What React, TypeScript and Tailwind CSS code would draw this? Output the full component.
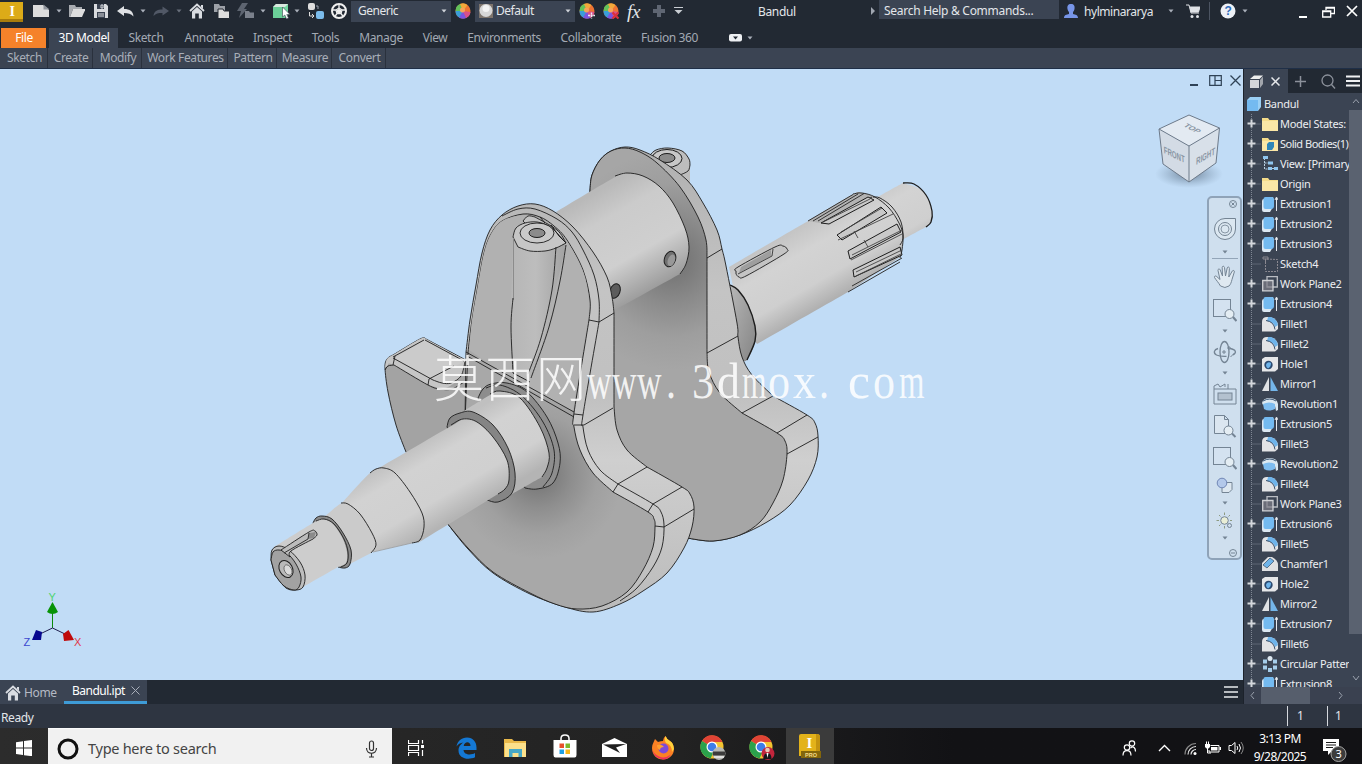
import type { ReactNode } from "react";
import clsx from "clsx";

const EDGE = "#1d1d1d";

// Catmull-Rom through the given points, a repeated point makes a corner
function spline(points: string, close = false) {
  const p = points.trim().split(/\s+/).map((s) => s.split(",").map(Number));
  let d = `M${p[0][0]} ${p[0][1]}`;
  for (let i = 0; i < p.length - 1; i++) {
    const a = p[Math.max(i - 1, 0)];
    const b = p[i];
    const c = p[i + 1];
    const e = p[Math.min(i + 2, p.length - 1)];
    if (b[0] === c[0] && b[1] === c[1]) continue;
    const x1 = b[0] + (c[0] - a[0]) / 6;
    const y1 = b[1] + (c[1] - a[1]) / 6;
    const x2 = c[0] - (e[0] - b[0]) / 6;
    const y2 = c[1] - (e[1] - b[1]) / 6;
    d += `C${x1.toFixed(1)} ${y1.toFixed(1)} ${x2.toFixed(1)} ${y2.toFixed(1)} ${c[0]} ${c[1]}`;
  }
  return close ? d + "Z" : d;
}

function Face({ pts, fill, stroke = "none" }: { pts: string; fill: string; stroke?: string }) {
  return <path d={spline(pts, true)} fill={fill} stroke={stroke} strokeWidth=".9" />;
}

function Line({ pts, w = 0.9 }: { pts: string; w?: number }) {
  return <path d={spline(pts)} fill="none" stroke={EDGE} strokeWidth={w} />;
}

function Icon({ className, w = 16, h = 16, children }: { className?: string; w?: number; h?: number; children: ReactNode }) {
  return (
    <svg className={clsx("shrink-0", className)} width={w} height={h} viewBox={`0 0 ${w} ${h}`} fill="none">
      {children}
    </svg>
  );
}

function Caret({ className, color = "#aab0ba" }: { className?: string; color?: string }) {
  return (
    <Icon w={6} h={4} className={className}>
      <path d="M.5 .5h5L3 3.5z" fill={color} />
    </Icon>
  );
}

/* ---------- 3D MODEL ---------- */

const WATERMARK: [string, number, number][] = [
  ["w", 587, 24.5], ["w", 612, 24.5], ["w", 637, 24.5], [".", 666, 10],
  ["3", 692, 22], ["d", 717, 23], ["m", 742, 24.5], ["o", 768, 22], ["x", 793, 23], [".", 819, 10],
  ["c", 848, 22], ["o", 873, 22], ["m", 899, 25.5],
];

function Crankshaft() {
  return (
    <svg className="block" width="1243" height="611" viewBox="0 69 1243 611">
      <defs>
        <linearGradient id="front" gradientUnits="userSpaceOnUse" x1="454" y1="422" x2="496" y2="494">
          <stop offset="0" stopColor="#c0c0c0" />
          <stop offset=".25" stopColor="#d2d2d2" />
          <stop offset=".7" stopColor="#d0d0d0" />
          <stop offset="1" stopColor="#b4b4b4" />
        </linearGradient>
        <linearGradient id="pin" gradientUnits="userSpaceOnUse" x1="628" y1="174" x2="684" y2="272">
          <stop offset="0" stopColor="#b9b9b9" />
          <stop offset=".25" stopColor="#cbcbcb" />
          <stop offset=".65" stopColor="#cfcfcf" />
          <stop offset="1" stopColor="#9c9c9c" />
        </linearGradient>
        <linearGradient id="rear" gradientUnits="userSpaceOnUse" x1="808" y1="221" x2="849" y2="292">
          <stop offset="0" stopColor="#c4c4c4" />
          <stop offset=".3" stopColor="#d3d3d3" />
          <stop offset=".7" stopColor="#cfcfcf" />
          <stop offset="1" stopColor="#aeaeae" />
        </linearGradient>
        <linearGradient id="rim" gradientUnits="userSpaceOnUse" x1="0" y1="150" x2="0" y2="620">
          <stop offset="0" stopColor="#b0b0b0" />
          <stop offset=".3" stopColor="#c4c4c4" />
          <stop offset=".52" stopColor="#c0c0c0" />
          <stop offset=".66" stopColor="#cfcfcf" />
          <stop offset="1" stopColor="#bababa" />
        </linearGradient>
        <linearGradient id="boss" x1="0" y1="0" x2="1" y2="0">
          <stop offset="0" stopColor="#b6b6b6" />
          <stop offset=".45" stopColor="#bdbdbd" />
          <stop offset="1" stopColor="#a2a2a2" />
        </linearGradient>
        <linearGradient id="flange" x1="0" y1="0" x2="1" y2="1">
          <stop offset="0" stopColor="#b8b8b8" />
          <stop offset="1" stopColor="#848484" />
        </linearGradient>
        <radialGradient id="pinShade" gradientUnits="userSpaceOnUse" cx="672" cy="260" r="110">
          <stop offset="0" stopColor="#6e6e6e" />
          <stop offset=".4" stopColor="#8b8b8b" />
          <stop offset=".7" stopColor="#9e9e9e" />
          <stop offset="1" stopColor="#a6a6a6" />
        </radialGradient>
        <radialGradient id="webShade" gradientUnits="userSpaceOnUse" cx="538" cy="474" r="85">
          <stop offset="0" stopColor="#707070" />
          <stop offset=".4" stopColor="#8e8e8e" />
          <stop offset=".7" stopColor="#a0a0a0" />
          <stop offset="1" stopColor="#a8a8a8" />
        </radialGradient>
        <radialGradient id="cubeShade">
          <stop offset="0" stopColor="#5f7287" stopOpacity=".85" />
          <stop offset="1" stopColor="#7f98b0" stopOpacity="0" />
        </radialGradient>
      </defs>

      {/* output end of the shaft */}
      <Face pts="872,200 903,183 903,183 923,191 932,211 930,223 926,227 926,227 900,241 900,241" fill="url(#rear)" />
      <Line pts="903,183 914,184 926,195 932,211 931,222 926,227" w={1.3} />
      <Face pts="729,267 729,267 808,221 808,221 852,195 862,193 875,197 889,208 899,223 903,238 900,257 900,257 848,292 848,292 757,344 757,344 740,320 740,320" fill="url(#rear)" />
      <Face pts="808,221 808,221 852,195 862,193 875,197 875,197 826,224 826,224" fill="#b3b3b3" />
      <path d="M808 221L853 194.500M813 221L858 194M818 221L864 193.500M823 222L872 197M848 292L900 262M852 286L902 258" stroke="#333" />
      <Line pts="853,194 862,193 875,197 889,208 899,223 903,235 902,250 900,258" />
      <Line pts="873,197 880,198 892,207 901,222 903,238 900,245" />
      <path d="M821 223L868 197L874 200L829 224ZM837 235L881 207L887 213L842 240ZM848 251L897 224L901 232L850 259ZM853 270L900 247L902 255L854 277Z" fill="#c9c9c9" stroke={EDGE} />
      <path d="M823 222L870 199M841 232L882 208M852 255L902 230M856 272L902 250M856 276L901 254M854 231L858 238M864 240L868 247M838 240L893 214M851 260L902 234" stroke="#444" strokeWidth=".9" />
      <Face pts="736,271 738,267 775,247 783,246 787,249 784,254 746,276 739,277 736,274" fill="#c4c4c4" stroke={EDGE} />
      <path d="M739 273L771 256L771 250L741 267Z" fill="#9e9e9e" />
      <path d="M738 274L772 256L773 249" stroke="#444" fill="none" />
      <Face pts="729,285 738,289 748,304 755,326 755,341 747,360 740,355 730,320" fill="url(#flange)" />
      <Line pts="730,285 738,290 748,305 755,326 755,341 747,360" w={1.4} />

      {/* rear web */}
      <Face
        pts="651,156 655,151 668,148 683,151 690,160 690,160 690,184 690,184 672,176"
        fill="#bdbdbd"
      />
      <Line pts="650,155 656,150 668,148 682,151 689,159 690,165" />
      <Line pts="690,165 688,171 680,175" />
      <ellipse cx="667" cy="158.500" rx="15" ry="9" fill="#c8c8c8" stroke={EDGE} />
      <ellipse cx="667" cy="158" rx="8" ry="4.500" fill="#8b8b8b" stroke={EDGE} />
      <Face
        pts="590,190 592,175 600,160 611,151 625,147 640,150 660,160 687,180 703,203 717,230 722,249 726,266 737,323 738,337 742,357 752,375 773,396 773,396 807,415 815,423 818,436 817,457 808,480 790,505 767,522 740,535 713,541 687,538 687,538 600,520 600,520 590,400 590,400"
        fill="url(#rim)"
        stroke={EDGE}
      />
      <Face
        pts="590,190 592,175 600,160 611,151 625,148 640,152 657,163 680,187 698,217 706,240 707,258 707,258 707,353 707,353 709,372 720,393 742,413 742,413 777,433 785,441 787,454 783,480 773,503 760,522 740,535 713,541 687,538 687,538 600,520 600,520 590,400 590,400"
        fill="url(#pinShade)"
        stroke={EDGE}
      />
      <path d="M707 258L722 249M707 353L738 336M742 413L773 396M777 433L807 415M787 454L818 437" stroke={EDGE} strokeWidth=".9" />

      {/* crank pin */}
      <Face pts="556,212 556,212 615,177 627,173 643,176 659,186 673,203 685,228 689,247 686,265 680,274 680,274 613,311 613,311 590,250 590,250" fill="url(#pin)" />
      <Line pts="615,176 627,173 643,176 659,186 673,203 685,228 689,247 686,264 680,274" />
      <ellipse cx="670" cy="259" rx="5.500" ry="8" transform="rotate(20 670 259)" fill="#6f6f6f" stroke={EDGE} />
      <ellipse cx="671.500" cy="260.500" rx="3.500" ry="6" transform="rotate(20 672 260)" fill="#989898" />
      <ellipse cx="615" cy="291" rx="5" ry="7.500" transform="rotate(20 615 291)" fill="#5c5c5c" stroke={EDGE} />

      {/* front web, left lobe */}
      <Face
        pts="406,452 396,425 388,392 385,368 387,359 393,355 393,355 420,339 426,339 426,339 464,359 464,359 500,380 500,380 500,430 500,430 420,470 420,470"
        fill="#a3a3a3"
        stroke={EDGE}
      />
      <Face pts="385,368 387,359 393,355 393,355 420,339 426,339 426,339 465,360 465,360 462,375 450,386 440,388 428,385 428,385 393,365 388,365 388,365" fill="#c6c6c6" />
      <Face pts="395,358 395,358 425,340 425,340 464,361 464,361 453,368 453,368 432,380 432,380" fill="#cbcbcb" />
      <path d="M393 357L424 340M393 365L395 356M393 358L433 380M428 385L429 379L454 366M425 340L464 361" stroke={EDGE} fill="none" strokeWidth=".9" />
      <Line pts="385,370 388,366 394,365 394,365 428,385 440,389 452,389 464,382" />
      <Line pts="433,380 442,383 451,383 461,376 465,362" />

      {/* front web */}
      <Face
        pts="466,352 466,352 470,320 476,285 482,253 490,230 502,215 518,206 535,204 553,211 573,227 593,252 607,277 612,297 614,313 614,313 614,407 614,407 617,430 627,450 647,467 647,467 682,487 690,494 694,507 692,527 684,548 667,573 643,591 620,604 593,612 565,607 530,594 493,573 468,549 447,523 447,523 430,480 430,480 465,420 465,420"
        fill="url(#rim)"
        stroke={EDGE}
      />
      <Face
        pts="468,352 468,352 472,320 478,285 484,253 491,234 502,221 523,214 540,217 554,226 567,240 583,270 590,300 589,320 589,320 574,413 574,427 580,450 593,473 613,492 613,492 648,512 654,519 655,527 653,547 643,570 627,592 602,606 577,609 555,604 530,593 493,572 468,548 447,523 447,523 430,480 430,480 465,420 465,420"
        fill="url(#webShade)"
        stroke={EDGE}
      />
      <Face pts="469,350 469,350 472,320 478,285 484,253 491,234 502,221 523,215 540,218 554,227 567,241 583,271 589,300 588,320 588,320 573,411 573,411 520,385 520,385" fill="#b1b1b1" />
      <Line pts="502,216 518,209 535,209 557,219 572,232 583,250 594,275 599,300 599,322 599,322 583,415 583,427 588,450 600,470 618,484 618,484 653,504 661,512 664,525 662,547 653,567 637,588 620,601" />
      <path
        d="M589 320L599 322L614 313M574 414L583 415M574 425L584 425L613 408M613 492L618 484L647 467M648 512L653 504L682 487M655 526L664 527L694 509"
        fill="none"
        stroke={EDGE}
        strokeWidth=".9"
      />
      <path d="M466 352L574 412M467 356L574 417" stroke={EDGE} strokeWidth=".9" />

      {/* oil boss */}
      <Face pts="513,238 513,238 511,327 513,373 513,373 525,380 525,380 542,343 553,300 566,245 566,245" fill="url(#boss)" />
      <Face pts="523,221 523,221 528,216 535,217 535,217 557,230 566,243 566,243 550,249 550,249" fill="#c3c3c3" stroke={EDGE} />
      <Face pts="513,237 516,228 525,223 537,222 549,226 558,234 558,234 566,243 566,243 556,248 545,251 530,251 518,247" fill="#c6c6c6" stroke={EDGE} />
      <ellipse cx="537" cy="233" rx="17" ry="10" fill="#c9c9c9" stroke={EDGE} strokeWidth=".9" />
      <ellipse cx="537" cy="233" rx="8" ry="4.500" fill="#8b8b8b" stroke={EDGE} />
      <path d="M540 217L545 223M551 225L559 236L566 243" stroke={EDGE} fill="none" />
      <path d="M513.500 238V300" stroke="#8c8c8c" />
      <Line pts="513,298 511,327 513,373" />
      <Line pts="556,247 552,290 541,338 528,374" />
      <Line pts="566,245 560,281 549,327 531,378" />
      <path d="M513 373L530 382" stroke={EDGE} />

      {/* collar */}
      <Face pts="478,398 483,389 491,384 507,383 527,392 547,417 558,443 560,463 553,483 537,489 525,488 525,488 500,440 500,440" fill="#8d8d8d" stroke={EDGE} />
      <Line pts="486,388 500,385 522,396 543,422 554,450 552,473 543,487" />
      <Face pts="464,411 464,411 490,395 500,391 520,398 540,427 549,453 547,468 542,477 542,477 512,494 512,494 480,450 480,450" fill="url(#front)" />
      <Line pts="490,394 500,391 520,398 540,427 549,453 547,468 542,477" />
      <Face pts="447,427 450,418 460,413 473,412 493,425 508,448 515,473 512,493 498,502 487,500 487,500 460,450 460,450" fill="#858585" stroke={EDGE} />
      <Face pts="372,472 372,472 451,426 463,419 477,422 493,437 507,460 509,480 505,489 498,494 498,494 418,543 418,543 395,500 395,500" fill="url(#front)" />
      <Line pts="451,425 463,419 477,422 493,437 507,460 509,480 505,489 498,494" />
      <Face pts="342,503 342,503 370,473 383,468 395,473 410,492 422,513 424,527 420,540 412,543 412,543 372,552 372,552 350,530 350,530" fill="url(#front)" />
      <Line pts="370,473 376,469 384,468 395,473 410,492 422,513 424,527 420,540 412,543" />
      <path d="M412 543L373 552" stroke="#9b9b9b" strokeWidth=".8" />
      <Face pts="322,519 322,519 340,504 347,504 360,514 372,533 376,545 371,553 371,553 350,564 350,564" fill="#cbcbcb" />
      <Line pts="341,503 348,504 360,514 372,533 376,545 371,553" />
      <Face pts="313,523 316,518 322,516 332,519 343,533 351,550 350,564 345,568 338,567 338,567 320,540 320,540" fill="#8a8a8a" stroke={EDGE} />
      <Face pts="274,547 274,547 313,523 322,519 332,523 342,537 347,552 346,563 338,567 338,567 303,587 303,587 280,570 280,570" fill="#cdcdcd" />
      <Line pts="316,521 324,519 334,524 344,539 348,552 347,563 341,567" />
      <Face pts="271,560 272,550 279,546 289,550 300,562 305,575 303,587 296,590 286,588 275,575" fill="#bdbdbd" stroke={EDGE} />
      <Face pts="271,560 273,552 279,550 287,553 296,564 301,577 299,587 294,590 284,586 275,575" fill="#a2a2a2" stroke={EDGE} />
      <ellipse cx="286" cy="569" rx="6.500" ry="9" transform="rotate(-28 286 569)" fill="#b9b9b9" stroke={EDGE} />
      <ellipse cx="288" cy="570" rx="3.500" ry="5.500" transform="rotate(-28 288 570)" fill="#dadada" stroke="#555" strokeWidth=".7" />
      <Face pts="281,550 281,550 309,532 315,531 317,535 313,539 313,539 291,551 290,557 290,557" fill="#bcbcbc" stroke={EDGE} />
      <path d="M309 533L316 532L314 538L308 539Z" fill="#8b8b8b" />
      <path d="M284 553L308 539L309 533" stroke="#333" fill="none" />

      {/* watermark */}
      <g fill="#fff" fillOpacity=".85">
        <text x="434" y="397" fontSize="50" fontWeight="200" textLength="152" fontFamily="Noto Sans CJK SC, sans-serif">
          莫西网
        </text>
        <g fontSize="51" fontFamily="Liberation Serif, serif">
          {WATERMARK.map(([ch, x, w]) => (
            <text key={x} x={x} y="397.500" textLength={w} lengthAdjust="spacingAndGlyphs">
              {ch}
            </text>
          ))}
        </g>
      </g>

      {/* view cube */}
      <ellipse cx="1189" cy="174" rx="34" ry="14" fill="url(#cubeShade)" />
      <path d="M1189 115L1219.500 128L1189 146L1159 129Z" fill="#e3eaf2" />
      <path d="M1159 129L1189 146V182L1163 164Z" fill="#d3dbe5" />
      <path d="M1219.500 128L1189 146V182L1216 163Z" fill="#d8e0e9" />
      <path d="M1189 115L1219.500 128L1216 163L1189 182L1163 164L1159 129ZM1159 129L1189 146L1219.500 128M1189 146V182" fill="none" stroke="#6d7a8a" />
      <g fill="#8995a3" fontSize="9" fontWeight="700" fontFamily="Liberation Sans, sans-serif">
        <text transform="matrix(.8 .42 -.7 .45 1183 126)" textLength="18" lengthAdjust="spacingAndGlyphs">TOP</text>
        <text transform="matrix(.87 .42 .06 1.100 1164 153)" textLength="24" lengthAdjust="spacingAndGlyphs">FRONT</text>
        <text transform="matrix(.82 -.48 -.04 1.100 1196 165)" textLength="23" lengthAdjust="spacingAndGlyphs">RIGHT</text>
      </g>

      {/* axis triad */}
      <path d="M52.500 628V612" stroke="#0a8a0a" />
      <path d="M52.500 628L40 634M52.500 628L65 634" stroke="#202050" />
      <path d="M52.500 602L58 612Q52.500 616 47 612Z" fill="#079307" />
      <path d="M32 640L36 630L42 632L41 640Z" fill="#06068f" />
      <path d="M74 640L68.500 630L63 634L64 641Z" fill="#bf0a0a" />
      <g fontSize="11" fontFamily="Liberation Sans, sans-serif">
        <text x="48.500" y="601" fill="#4fd46f">Y</text>
        <text x="23.500" y="646" fill="#3c48d0">Z</text>
        <text x="74" y="646" fill="#e03a4a">X</text>
      </g>
    </svg>
  );
}

/* ---------- NAVIGATION BAR ---------- */

const NAV = "#748494";

function NavItem({ className, children }: { className: string; children: ReactNode }) {
  return <div className={clsx("flex w-full shrink-0 items-center justify-center", className)}>{children}</div>;
}

function ZoomWindow() {
  return (
    <Icon w={24} h={24}>
      <rect x=".5" y="1.500" width="17" height="17" stroke={NAV} fill="#d4e2f0" />
      <circle cx="16.500" cy="16" r="4.500" fill="#e4edf3" stroke={NAV} />
      <path d="M20 19l3.500 4" stroke={NAV} strokeWidth="2.200" />
    </Icon>
  );
}

function NavBar() {
  return (
    <div className="absolute top-[127px] left-[1207px] flex h-[364px] w-[35px] flex-col items-center rounded-[5px] border-2 border-[#8fa3b8] bg-[#cfdfee]">
      <NavItem className="h-[12px] justify-end pr-[3px]">
        <Icon w={8} h={8}>
          <circle cx="4" cy="4" r="3.500" stroke={NAV} />
          <path d="M2.500 2.500l3 3m0-3l-3 3" stroke={NAV} />
        </Icon>
      </NavItem>
      <NavItem className="h-[38px]">
        <Icon w={24} h={24}>
          <path d="M12 1.500h10.500V12A10.500 10.500 0 1 1 12 1.500z" stroke={NAV} fill="#dbe7f1" />
          <circle cx="12" cy="12" r="6.500" stroke={NAV} />
          <circle cx="12" cy="12" r="4" stroke={NAV} strokeWidth=".8" />
        </Icon>
      </NavItem>
      <NavItem className="h-[8px]"><Caret color={NAV} /></NavItem>
      <NavItem className="h-[4px]"><div className="h-px w-[26px] bg-[#93a5b8]" /></NavItem>
      <NavItem className="h-[33px]">
        <Icon w={24} h={24}>
          <path
            d="M7.500 21C5.500 17.500 3 15 1.500 12.500c-.5-1.500 1-2 2.200-1L7 14.500 5 5.500c-.3-1.700 1.700-2.200 2.200-.6L9.500 11l-.3-8.500c0-1.700 2-1.700 2.300 0L12.500 11l1.700-8c.4-1.500 2.300-1.200 2.200.4L15.800 12l3.500-6c.8-1.300 2.500-.4 2 1L19 14.500c-.7 3-1.500 5-3 6.500q-4 3-8.500 0z"
            fill="#dfe9f1"
            stroke={NAV}
          />
        </Icon>
      </NavItem>
      <NavItem className="h-[34px]"><ZoomWindow /></NavItem>
      <NavItem className="h-[8px]"><Caret color={NAV} /></NavItem>
      <NavItem className="h-[34px]">
        <Icon w={24} h={24}>
          <ellipse cx="11.500" cy="12" rx="4.500" ry="10.500" stroke={NAV} strokeWidth="1.300" />
          <path d="M5 8.500C1 9.500 0 13 3.500 15c3 1.500 6 1.500 10 1.300M17 8.500c6 1 7 4 3 6.500" stroke={NAV} strokeWidth="1.300" />
          <path d="M11 10v4M9 12h4M16 6v4M14 8h4M21.500 13l-4 4" stroke={NAV} />
        </Icon>
      </NavItem>
      <NavItem className="h-[8px]"><Caret color={NAV} /></NavItem>
      <NavItem className="h-[34px]">
        <Icon w={24} h={24}>
          <path d="M1 7h22v15H1zM1 7V4l4-2 2 3 5-3v3M15 7V2" stroke={NAV} />
          <rect x="5" y="11" width="14" height="7" fill="#b3c1cf" stroke={NAV} />
        </Icon>
      </NavItem>
      <NavItem className="h-[30px]">
        <Icon w={24} h={24}>
          <path d="M1.500 1.500h10l4 4v14h-14zM11.500 1.500v4h4" stroke={NAV} fill="#dbe6f0" />
          <circle cx="15.500" cy="16.500" r="4.500" fill="#e4edf3" stroke={NAV} />
          <path d="M19 19.500l3.500 3.500" stroke={NAV} strokeWidth="2" />
        </Icon>
      </NavItem>
      <NavItem className="h-[33px]"><ZoomWindow /></NavItem>
      <NavItem className="h-[23px]">
        <Icon w={18} h={18}>
          <path d="M9 5.500h7v7l-3 3H6v-5z" stroke={NAV} fill="#dde7f0" />
          <circle cx="6" cy="6" r="4.800" fill="#b3c8ea" stroke="#7086b5" />
        </Icon>
      </NavItem>
      <NavItem className="h-[11px]"><Caret color={NAV} /></NavItem>
      <NavItem className="h-[25px]">
        <Icon w={18} h={18}>
          <circle cx="8.500" cy="8.500" r="3.800" fill="#e9eed6" stroke={NAV} />
          <path d="M8.500 .5v2.500M8.500 14v2.500M.5 8.500H3M14 8.500h2M3 3l1.500 1.500M14 3l-1.500 1.500M3 14l1.500-1.500" stroke="#8d9a80" />
          <circle cx="13.500" cy="13.500" r="2" stroke={NAV} />
        </Icon>
      </NavItem>
      <NavItem className="h-[10px]"><Caret color={NAV} /></NavItem>
      <NavItem className="h-[19px] justify-end pr-[3px]">
        <Icon w={8} h={8}>
          <circle cx="4" cy="4" r="3.500" stroke={NAV} />
          <path d="M2 4h4" stroke={NAV} />
        </Icon>
      </NavItem>
    </div>
  );
}

/* ---------- TITLE BAR ---------- */

function ColorBall({ badge }: { badge?: "plus" | "cross" }) {
  return (
    <Icon>
      <circle cx="8" cy="8" r="7.500" fill="#ee7433" />
      <path d="M8 8L.5 8A7.500 7.500 0 0 1 6 .8z" fill="#62c25a" />
      <path d="M8 8L5 1A7.500 7.500 0 0 1 12.500 2z" fill="#f2a83a" />
      <path d="M8 8L.5 8A7.500 7.500 0 0 0 5 15z" fill="#3a9ed8" />
      <path d="M8 8L4 14.500A7.500 7.500 0 0 0 12 14.500z" fill="#7a55e0" />
      <path d="M8 8L11 15A7.500 7.500 0 0 0 15.500 9z" fill="#d8508a" />
      <circle cx="7.500" cy="7" r="2.500" fill="#f6a45a" />
      {badge === "plus" && <path d="M12.500 9.500v6M9 12.500h7" stroke="#e9edf3" strokeWidth="1.400" strokeDasharray="2 .6" />}
      {badge === "cross" && <path d="M9.500 9.500l6 6m0-6l-6 6" stroke="#d8303c" strokeWidth="2.200" />}
    </Icon>
  );
}

function HomeIcon({ className }: { className?: string }) {
  return (
    <Icon className={className}>
      <path d="M1 8L8 1.500 15 8" stroke="#d9dce1" strokeWidth="1.800" />
      <path d="M12 2h2v4l-2-2zM3 8.500l5-4.500 5 4.500V15.500H9.800V10.500H6.200v5H3z" fill="#d9dce1" />
    </Icon>
  );
}

function TitleBar() {
  return (
    <div className="flex h-[22px] items-center text-[12px] tracking-[-0.35px] text-[#e3e6ea]">
      <Icon w={24} h={22}>
        <path d="M0 2h23v21H0z" fill="#dcab18" />
        <path d="M0 19h23v4H0z" fill="#a87c0c" />
        <text x="9.500" y="16" fontSize="14" fontWeight="700" fontFamily="Liberation Serif, serif" fill="#fff">I</text>
      </Icon>
      <Icon className="ml-[9px]">
        <path d="M0 2h10l6 5v7H0z" fill="#dcdcdc" />
        <path d="M10.500 1.500v5h6z" fill="#8f949c" />
      </Icon>
      <Caret className="ml-[7px]" />
      <Icon className="ml-[7px]">
        <path d="M0 2h6l1 2h6v2H4L1 14H0z" fill="#a8abb0" />
        <path d="M4 6h12.500l-3.500 8H1z" fill="#dedede" />
      </Icon>
      <Icon className="ml-[9px]" w={14}>
        <path d="M0 1h12l2 2v12H0z" fill="#d9dbde" />
        <path d="M3 1h7v5H3zM3 9h8v6H3z" fill="#3a4250" />
        <path d="M7 2h2v3H7zM4 11h6M4 13h6" stroke="#d9dbde" />
      </Icon>
      <Icon className="ml-[9px]" w={17}>
        <path d="M0 8l7-5v3c6 0 9 2 9.500 7.500C14 10.500 11 10 7 10v3z" fill="#dfe1e4" />
      </Icon>
      <Caret className="ml-[6px]" />
      <Icon className="ml-[7px]">
        <path d="M16 8L9.500 3.500v3C4 6.500 1 8 .5 13 3 10.500 5 10 9.500 10v2.500z" fill="#515866" />
      </Icon>
      <Caret className="ml-[7px]" color="#69707c" />
      <HomeIcon className="ml-[7px]" />
      <Icon className="ml-[9px]">
        <path d="M0 1h5l1 2h5v6H0z" fill="#9da1a8" />
        <path d="M4 6h5l1 2h5.500v7.500H4z" fill="#dedede" stroke="#222933" />
      </Icon>
      <Icon className="ml-[7px]" w={17}>
        <path d="M5 0h6L7 6h3L2 15l2-7H0z" fill="#5d6470" />
        <path d="M8 8h4l1 1.500h4V15H8z" fill="#7a808b" />
      </Icon>
      <Caret className="ml-[6px]" />
      <Icon className="ml-[7px]" w={18}>
        <path d="M3 1h12v11l-3 3H0V4z" fill="#73d6a0" />
        <path d="M0 4h12v11H0z" fill="#6bcf98" />
        <path d="M0 4l3-3h12l-3 3z" fill="#d9e8df" />
        <path d="M9.500 4v10l2.300-2 1.700 4 2-1-1.700-3.500H17z" fill="#fff" stroke="#39424f" strokeWidth=".6" />
      </Icon>
      <Caret className="ml-[3px]" />
      <Icon className="ml-[7px]" w={17}>
        <rect x="1" y="0" width="7" height="7" rx="2" fill="#dedede" />
        <rect x="9" y="8" width="8" height="8" rx="2" fill="#7bbcec" />
        <path d="M2.500 9v4H7M5 11l2 2-2 2" stroke="#dedede" />
        <path d="M9 3h2v3" stroke="#9aa1ad" />
      </Icon>
      <Icon className="ml-[7px]">
        <circle cx="8" cy="8" r="7" stroke="#f0f0f0" strokeWidth="2" />
        <path d="M8 5l3 2-1 3.500H6L5 7zM8 1v4M1 7h4M11 7h4M6 10.500L3.500 14M10 10.500l2.500 3.500" stroke="#f0f0f0" strokeWidth="1.300" />
        <path d="M8 5.500l2.500 2-1 3h-3l-1-3z" fill="#f0f0f0" />
      </Icon>

      <div className="ml-[4px] flex h-[21px] w-[100px] items-center justify-between bg-[#3b4453] pr-1 pl-[7px]">
        <span className="tracking-[-0.5px]">Generic</span>
        <Caret color="#d0d4da" />
      </div>
      <div className="ml-[4px]"><ColorBall /></div>
      <div className="ml-[4px] flex h-[21px] w-[100px] items-center bg-[#3b4453] pr-1 pl-[4px]">
        <Icon w={14} h={14}>
          <rect width="14" height="14" fill="#7d746c" />
          <circle cx="7" cy="6.500" r="6.500" fill="#d7d7d7" />
          <circle cx="7" cy="4.500" r="3.500" fill="#f3f3f3" />
        </Icon>
        <span className="ml-[3px] grow tracking-[-0.5px]">Default</span>
        <Caret color="#d0d4da" />
      </div>
      <div className="ml-[4px]"><ColorBall badge="plus" /></div>
      <div className="ml-[8px]"><ColorBall badge="cross" /></div>
      <span className="ml-[8px] w-[18px] font-['Liberation_Serif'] text-[19px] leading-none italic">fx</span>
      <Icon className="ml-[8px]" w={12} h={12}>
        <path d="M4 0h4v4h4v4H8v4H4V8H0V4h4z" fill="#5f6673" />
      </Icon>
      <Icon className="ml-[9px]" w={9} h={8}>
        <path d="M0 .5h9" stroke="#c9cdd3" />
        <path d="M.5 3h8l-4 4z" fill="#c9cdd3" />
      </Icon>

      <span className="ml-[75px] w-[113px] pt-[2px]">Bandul</span>
      <Icon w={4} h={8}><path d="M0 0l4 4-4 4z" fill="#a0a6b0" /></Icon>
      <div className="ml-[4px] flex h-[19px] w-[180px] items-center self-start bg-[#3b4453] pt-[3px] pl-[5px] tracking-[-0.28px]">
        Search Help &amp; Commands...
      </div>
      <Icon className="ml-[5px]" w={14}>
        <path d="M7 1c3 0 4 2 3.500 5-.3 1.500-1 2.500-1.500 3v2c2.500.5 5 1 5 4H0c0-3 2.500-3.500 5-4V9c-.5-.5-1.200-1.500-1.500-3C3 3 4 1 7 1z" fill="#7795e8" />
      </Icon>
      <span className="ml-[6px] w-[84px] pt-[2px] tracking-[-0.45px]">hylminararya</span>
      <Caret />
      <Icon className="ml-[12px]" w={14}>
        <path d="M0 2h3l2 8h8M4 4h10l-1.500 5H5z" stroke="#dfe2e6" />
        <path d="M4 4h10l-1.500 5H5z" fill="#dfe2e6" />
        <circle cx="6" cy="13.500" r="1.500" fill="#dfe2e6" />
        <circle cx="11.500" cy="13.500" r="1.500" fill="#dfe2e6" />
      </Icon>
      <div className="ml-[9px] h-[18px] w-px bg-[#4c5462]" />
      <Icon className="ml-[10px]">
        <circle cx="8" cy="8" r="7.500" fill="#eef1f6" />
        <text x="4.500" y="12.300" fontSize="12" fontWeight="700" fontFamily="Liberation Sans, sans-serif" fill="#2e6bb8">?</text>
      </Icon>
      <Caret className="ml-[6px]" />
      <Icon className="ml-[50px]" w={10}><path d="M1 14h8" stroke="#fff" strokeWidth="2" /></Icon>
      <Icon className="ml-[14px]" w={13}>
        <path d="M4 7V4.500h8.500v6H9M4 5h8.500" stroke="#fff" strokeWidth="1.300" />
        <path d="M.7 8h8v6h-8zM.7 8.600h8" stroke="#fff" strokeWidth="1.300" />
      </Icon>
      <Icon className="ml-[11px]" w={12}><path d="M1 3l10 10M11 3L1 13" stroke="#fff" strokeWidth="1.700" /></Icon>
    </div>
  );
}

/* ---------- RIBBON ---------- */

const TABS = [
  ["Sketch", "w-[55px]"],
  ["Annotate", "w-[71px]"],
  ["Inspect", "w-[56px]"],
  ["Tools", "w-[50px]"],
  ["Manage", "w-[61px]"],
  ["View", "w-[47px]"],
  ["Environments", "w-[91px]"],
  ["Collaborate", "w-[83px]"],
  ["Fusion 360", "w-[74px]"],
];

const PANELS = [
  ["Sketch", "w-[48px]"],
  ["Create", "w-[45px]"],
  ["Modify", "w-[49px]"],
  ["Work Features", "w-[86px]"],
  ["Pattern", "w-[49px]"],
  ["Measure", "w-[55px]"],
  ["Convert", "w-[54px]"],
];

function Ribbon() {
  return (
    <>
      <div className="mt-[6px] flex h-[20px] items-center text-center text-[12px] tracking-[-0.38px] whitespace-nowrap text-[#a3a9b3]">
        <div className="ml-px w-[45px] bg-[#f5822a] pl-px leading-[20px] text-white">File</div>
        <div className="ml-[3px] w-[69px] bg-[#3b4453] pl-px leading-[20px] text-white">3D Model</div>
        {TABS.map(([name, width]) => (
          <div key={name} className={clsx("pl-px leading-[20px]", width)}>{name}</div>
        ))}
        <Icon className="ml-[23px]" w={13} h={8}>
          <rect width="13" height="7.500" rx="2" fill="#eef0f3" />
          <path d="M4 2.500h5L6.500 5.500z" fill="#222933" />
        </Icon>
        <Caret className="ml-[5px]" />
      </div>
      <div className="flex h-[21px] border-b border-[#1f2f47] bg-[#3b4453] text-center text-[12px] tracking-[-0.38px] whitespace-nowrap text-[#a9afb9]">
        {PANELS.map(([name, width]) => (
          <div key={name} className={clsx("border-r border-[#2a313d] pl-[2px] leading-[20px]", width)}>{name}</div>
        ))}
      </div>
    </>
  );
}

/* ---------- MODEL BROWSER ---------- */

type Kind = "folder" | "bodies" | "view" | "extrude" | "sketch" | "plane" | "fillet" | "hole" | "mirror" | "revolve" | "chamfer" | "pattern";

const TREE: [string, Kind][] = [
  ["Model States:", "folder"],
  ["Solid Bodies(1)", "bodies"],
  ["View: [Primary", "view"],
  ["Origin", "folder"],
  ["Extrusion1", "extrude"],
  ["Extrusion2", "extrude"],
  ["Extrusion3", "extrude"],
  ["Sketch4", "sketch"],
  ["Work Plane2", "plane"],
  ["Extrusion4", "extrude"],
  ["Fillet1", "fillet"],
  ["Fillet2", "fillet"],
  ["Hole1", "hole"],
  ["Mirror1", "mirror"],
  ["Revolution1", "revolve"],
  ["Extrusion5", "extrude"],
  ["Fillet3", "fillet"],
  ["Revolution2", "revolve"],
  ["Fillet4", "fillet"],
  ["Work Plane3", "plane"],
  ["Extrusion6", "extrude"],
  ["Fillet5", "fillet"],
  ["Chamfer1", "chamfer"],
  ["Hole2", "hole"],
  ["Mirror2", "mirror"],
  ["Extrusion7", "extrude"],
  ["Fillet6", "fillet"],
  ["Circular Patter", "pattern"],
  ["Extrusion8", "extrude"],
];

const LEAVES = ["Sketch4", "Fillet1", "Fillet2", "Fillet3", "Fillet4", "Work Plane3", "Fillet5", "Chamfer1", "Fillet6"];

function KindIcon({ kind }: { kind: Kind }) {
  switch (kind) {
    case "folder":
    case "bodies":
      return (
        <Icon>
          <path d="M0 2h6l1.500 2H16v11H0z" fill="#f5dc8a" />
          <path d="M0 5h16v10H0z" fill="#fbe7a6" />
          {kind === "bodies" && <path d="M5 8l2-2h5v5l-2 3H5z" fill="#2f86b8" />}
        </Icon>
      );
    case "view":
      return (
        <Icon>
          <path d="M2.500 2v11H6M2.500 7H6M10 12.500h2" stroke="#b9cfe2" strokeDasharray="2 1" />
          <path d="M1 0h5v3H1zM6 5.500h5v3H6zM6 11h4v3H6zM12 11h4v3h-4z" fill="#8fc5ee" />
        </Icon>
      );
    case "extrude":
      return (
        <Icon>
          <path d="M0 5q0-2 2-2l9-2v10l-3 5H2q-2 0-2-2z" fill="#dce8f2" />
          <path d="M1.500 3q0-2 2-2H10q2 0 2 2v7q0 3-3 3H3.500q-2 0-2-2z" fill="#74baf0" />
          <path d="M14.500 2v13M13 4l1.500-3L16 4" stroke="#e8ebef" />
        </Icon>
      );
    case "sketch":
      return (
        <Icon>
          <path d="M3.500 3v12.500h12V3.500z" stroke="#8a8890" strokeDasharray="2 1" />
          <path d="M1 1h5v2H1zM3.500 3v3" stroke="#8a8890" />
        </Icon>
      );
    case "plane":
      return (
        <Icon>
          <path d="M5 .7h10.300V11H5z" stroke="#b9bcc2" strokeWidth="1.300" />
          <path d="M.7 4.500h10.300v10.300H.7z" stroke="#d0d2d6" strokeWidth="1.300" fill="#7f7f8a" fillOpacity=".7" />
        </Icon>
      );
    case "fillet":
      return (
        <Icon>
          <path d="M0 15.500V6q0-5 5-5h3q8 2 8 9v3l-3 2.500z" fill="#e3e4e6" />
          <path d="M6 1h3q6 2 7 8l-3 2q-1-5-8-6z" fill="#6fb4ea" />
          <path d="M4 4.500q8 1 9 9" stroke="#3a4d66" />
        </Icon>
      );
    case "hole":
      return (
        <Icon>
          <path d="M0 3l3-2h13v12l-3 2.500H0z" fill="#e6e7e9" />
          <circle cx="6.500" cy="9" r="4.200" fill="#2c4a70" />
          <path d="M4 9a3 3 0 0 1 5-2q0 4-3 5.500Q4 11 4 9z" fill="#6fb4ea" />
        </Icon>
      );
    case "mirror":
      return (
        <Icon>
          <path d="M0 15L7 1v14z" fill="#dfe1e4" />
          <path d="M8.500 1L16 15H8.500z" fill="#74b6ea" />
        </Icon>
      );
    case "revolve":
      return (
        <Icon>
          <path d="M0 7q1-5 8-5t8 6v6l-2 1-1-5-9-2-3 1z" fill="#dce8f0" />
          <path d="M1 8q6-3 12 0v5q-6 3-11 0z" fill="#7fbdf0" />
          <path d="M1 5q7-4 13 0" stroke="#3a5573" />
        </Icon>
      );
    case "chamfer":
      return (
        <Icon>
          <path d="M0 7l6-6h4q6 3 6 8v6H0z" fill="#e0e1e3" />
          <path d="M1 9l7-7 4 3-7 7z" fill="#6fb4ea" stroke="#3a4d66" strokeWidth=".7" />
        </Icon>
      );
    case "pattern":
      return (
        <Icon>
          <circle cx="8" cy="2.500" r="2.500" fill="#dfe9f2" />
          <path d="M1 3.500h4v4H1zM11 3.500h4v4h-4zM1 9.500h4v4H1zM11 9.500h4v4h-4zM6 12h4v4H6z" fill="#a6cdea" />
        </Icon>
      );
  }
}

function Browser() {
  return (
    <div className="flex h-[635px] w-[119px] flex-col border-l border-[#1c222b] bg-[#3b4453]">
      <div className="flex h-[24px] shrink-0 items-center bg-[#222933]">
        <div className="flex h-full w-[44px] items-center bg-[#3b4453] pl-[6px]">
          <Icon w={13} h={13}>
            <path d="M0 4l4-3.500h9L9.500 4z" fill="#eee" />
            <path d="M0 5h9v8H0z" fill="#d4d6d9" />
            <path d="M10 5l3-3.500V9l-3 4z" fill="#a2a6ac" />
          </Icon>
          <Icon className="ml-[8px]" w={9} h={9}><path d="M.5 .5l8 8m0-8l-8 8" stroke="#e6e8eb" strokeWidth="1.500" /></Icon>
        </div>
        <Icon className="ml-[7px]" w={11} h={11}><path d="M5.500 0v11M0 5.500h11" stroke="#8c919b" strokeWidth="1.500" /></Icon>
        <Icon className="ml-[15px]" w={15} h={15}>
          <circle cx="6.500" cy="6.500" r="5.500" stroke="#8c919b" strokeWidth="1.300" />
          <path d="M10.500 10.500l3.500 4" stroke="#8c919b" strokeWidth="1.300" />
        </Icon>
        <Icon className="ml-[10px]" w={14} h={12}><path d="M0 1.500h14M0 6h14M0 10.500h14" stroke="#f0f1f3" strokeWidth="2" /></Icon>
      </div>
      <div className="flex h-[594px] shrink-0">
        <div className="w-[105px] shrink-0 overflow-hidden font-['Noto_Sans'] text-[11px] tracking-[-0.3px] whitespace-nowrap text-[#eceef1]">
          <div className="flex h-[21px] items-center pl-[3px]">
            <Icon w={14} h={14}>
              <path d="M0 3l3-3h11v10l-3 4H0z" fill="#9bd0f5" />
              <path d="M0 3h11v11H0z" fill="#74baf0" />
            </Icon>
            <span className="ml-[3px] pt-px">Bandul</span>
          </div>
          {TREE.map(([label, kind]) => (
            <div key={label} className="flex h-[20px] items-center">
              <Icon w={15} h={20} className="ml-[3px]">
                <path d="M4.500 0v20M4.500 10h10" stroke="#7f8794" strokeDasharray="1 1" />
                {!LEAVES.includes(label) && (
                  <>
                    <path d="M0 5.500h9v9H0z" fill="#3b4453" />
                    <path d="M4.500 5.500v8M.5 9.500h8" stroke="#d4d7dc" strokeWidth="2" />
                  </>
                )}
              </Icon>
              <KindIcon kind={kind} />
              <span className={clsx("ml-[2px]", kind === "bodies" && "tracking-[-0.5px]")}>{label}</span>
            </div>
          ))}
        </div>
        <div className="flex w-[13px] flex-col items-center">
          <Icon w={14} h={17}><path d="M4 10l3-3.500L10 10" stroke="#9aa1ad" /></Icon>
          <div className="h-[524px] w-full bg-[#5a6270]" />
          <Icon className="mt-auto" w={14} h={17}><path d="M4 6l3 4 3-4" stroke="#9aa1ad" /></Icon>
        </div>
      </div>
      <div className="flex h-[17px] items-center bg-[#3a4150]">
        <Icon w={17} h={17}><path d="M10 5L7 8.500 10 12" stroke="#9aa1ad" /></Icon>
        <div className="h-full w-[49px] bg-[#565e6c]" />
        <Icon className="ml-[22px]" w={17} h={17}><path d="M7 5l3 3.500L7 12" stroke="#9aa1ad" /></Icon>
      </div>
    </div>
  );
}

/* ---------- TASKBAR ---------- */

function Chrome({ children }: { children: ReactNode }) {
  return (
    <Icon w={26} h={26}>
      <circle cx="12" cy="12" r="11.500" fill="#f4c430" />
      <path d="M12 12L2 6a11.500 11.500 0 0 1 20.500 1H12z" fill="#e04335" />
      <path d="M12 12L2 6a11.500 11.500 0 0 0 8.500 17.400L15 14z" fill="#2ba24c" />
      <circle cx="12" cy="12" r="5.500" fill="#fff" />
      <circle cx="12" cy="12" r="4.300" fill="#3d7de8" />
      {children}
    </Icon>
  );
}

function Taskbar() {
  return (
    <div className="flex h-[36px] items-center bg-linear-to-r from-[#2c2c2c] via-[#222] via-50% to-[#121215] to-70% text-white">
      <div className="flex w-[48px] justify-center pt-[4px]">
        <Icon>
          <path d="M0 2.200L7 1.200V7.600H0zM8 1L16 0V7.600H8zM0 8.600h7V15L0 14zM8 8.600h8V16.200L8 15.200z" fill="#fff" />
        </Icon>
      </div>
      <div className="flex h-full w-[344px] items-center border-t border-[#fafafa] bg-[#f1f1f1] pt-[4px] pl-[9px]">
        <Icon w={22} h={22}><circle cx="11" cy="11" r="9" stroke="#111" strokeWidth="3" /></Icon>
        <span className="ml-[9px] grow text-[14.5px] tracking-[-0.27px] text-[#444]">Type here to search</span>
        <Icon className="mr-[14px]" w={13} h={18}>
          <rect x="4.500" y="1" width="4" height="9.500" rx="2" stroke="#333" strokeWidth="1.200" />
          <path d="M1.500 8c0 7 10 7 10 0M6.500 13.500V17M4 17h5" stroke="#333" strokeWidth="1.200" />
        </Icon>
      </div>
      <Icon className="mt-1 ml-[16px]" w={18} h={18}>
        <path d="M.5 1v3.500h10V1M.5 17v-3.500h10V17M.5 6.500h10v5H.5zM14.500 1v3.500M14.500 11v6" stroke="#fff" strokeWidth="1.200" />
        <path d="M13 6h3v3h-3z" fill="#fff" />
      </Icon>
      <Icon className="mt-[3px] ml-[30px]" w={22} h={22}>
        <path
          d="M.5 9.500C1.500 4 5.500 .5 11 .5c6 0 9.500 4.500 9.500 10v2.500H7.500c.3 5 7.500 5.500 11.500 3v4.300C12 23.500 2.500 21.500 2.500 13.500c0-4 2.500-6.500 5-8C4 5.800 2 7.500.5 9.500zM7.700 9h6.800c0-5-6-5-6.800 0z"
          fill="#1478d4"
        />
      </Icon>
      <Icon className="mt-1 ml-[26px]" w={23} h={18}>
        <path d="M0 0h8l2 2h12v16H0z" fill="#e9b94a" />
        <path d="M1 4h21v14H1z" fill="#fbe08b" />
        <path d="M5 18v-8h13v8h-3.500v-4h-6v4z" fill="#46a8c6" />
      </Icon>
      <Icon className="ml-[26px]" w={24} h={24}>
        <path d="M8 7V4.500C8 2 9.500 1 12 1s4 1 4 3.500V7" stroke="#fff" strokeWidth="1.500" />
        <path d="M.5 6h23v15q0 2.500-2 2.500h-19q-2 0-2-2.500z" fill="#fff" />
        <path d="M6.500 9.500H11V14H6.500z" fill="#e8502a" />
        <path d="M12.500 9.500H17V14h-4.500z" fill="#7eb82c" />
        <path d="M6.500 15.500H11V20H6.500z" fill="#1e9fe4" />
        <path d="M12.500 15.500H17V20h-4.500z" fill="#f8b618" />
      </Icon>
      <Icon className="mt-1 ml-[25px]" w={25} h={20}>
        <path d="M0 6L12.500 0 25 6v13H0z" fill="#fff" />
        <path d="M1 6.500l17 8.500-4-5.500L24 6z" fill="#1f1f1f" />
      </Icon>
      <Icon className="mt-[3px] ml-[24px]" w={24} h={24}>
        <path d="M1 12C1 8 3 6 4 3l3 3q3-1 5-1 0-3 2.500-5 1 3 4.500 5t4 8c0 6-5 10.500-11 10.500S1 19 1 12z" fill="#fb8124" />
        <path d="M1 12q1 6 7 8.500t12-2q-3 5-8 5Q2 22 1 12z" fill="#ee2f5b" />
        <path d="M14.500 0q1 3 4.500 5t4 8l-2 3q0-7-6-9-2-3-.5-7z" fill="#ffd13b" />
        <circle cx="12.500" cy="12.500" r="5" fill="#7c4ad8" />
        <path d="M6 9q5-1 7 2-4 0-4 3-3-1-3-5z" fill="#ffa02e" />
      </Icon>
      <div className="mt-[3px] ml-[25px]">
        <Chrome>
          <circle cx="19" cy="18.500" r="6.500" fill="#b7b9b4" />
          <path d="M12.800 16.500h12.400v4H12.800z" fill="#3b3b3b" />
          <path d="M14 22h10" stroke="#eee" strokeWidth="1.500" />
        </Chrome>
      </div>
      <div className="mt-[3px] ml-[23px]">
        <Chrome>
          <circle cx="19" cy="18.500" r="6.500" fill="#c3253c" />
          <circle cx="18.500" cy="15" r="2.300" fill="#e8c8b8" />
          <path d="M14.500 24q0-6 4-6t4 6z" fill="#17171c" />
          <path d="M17.500 18h2l-1 5z" fill="#fff" />
        </Chrome>
      </div>
      <div className="ml-[11px] flex h-full w-[48px] items-center justify-center bg-[#3b3b3b]">
        <Icon w={22} h={24}>
          <path d="M0 2q0-2 2-2h16q3 0 3 3v19H0z" fill="#e3b21a" />
          <path d="M17 0h1q3 0 3 3v14h-4z" fill="#c49310" />
          <path d="M2 17h20v7H2z" fill="#83660c" />
          <text x="7.500" y="13.500" fontSize="15" fontWeight="700" fontFamily="Liberation Serif, serif" fill="#fff">I</text>
          <text x="6" y="22.500" fontSize="5.500" fontWeight="700" fontFamily="Liberation Sans, sans-serif" fill="#f4dc8a">PRO</text>
        </Icon>
      </div>

      <Icon className="mt-1 ml-[288px]" w={15}>
        <circle cx="10" cy="3.500" r="2.700" stroke="#fff" strokeWidth="1.200" />
        <circle cx="5" cy="7.500" r="2.700" stroke="#fff" strokeWidth="1.200" />
        <path d="M1 15.500c0-6.500 8-6.500 8 0M8.500 8c3-2.500 5 0 5 3.500" stroke="#fff" strokeWidth="1.200" />
      </Icon>
      <Icon className="mt-1 ml-[21px]" w={13} h={8}><path d="M1 7l5.500-5.500L12 7" stroke="#fff" strokeWidth="1.400" /></Icon>
      <Icon className="mt-1 ml-[13px]" w={13} h={13}>
        <path d="M1 12.500A11 11 0 0 1 12 1.500" stroke="#8a8a8a" strokeWidth="1.200" />
        <path d="M4 12.500a8 8 0 0 1 8-8M7 12.500a5 5 0 0 1 5-5" stroke="#e6e6e6" strokeWidth="1.200" />
        <circle cx="11" cy="11.500" r="1.500" fill="#fff" />
      </Icon>
      <Icon className="mt-[2px] ml-[7px]" w={17} h={13}>
        <path d="M6.500 4.500h8.500v6.500H5V9" stroke="#fff" />
        <path d="M7 6h6.500v3.500H7zM15.500 6H17v3h-1.500zM1 3h5v3L4.500 7.500h-2L1 6zM2 .5h1V3H2zM4 .5h1V3H4z" fill="#fff" />
        <path d="M3.500 7v5H7" stroke="#fff" />
      </Icon>
      <Icon className="mt-1 ml-[7px]" w={16} h={14}>
        <path d="M1 4.500h2.500L7 1.500v11L3.500 9.500H1z" stroke="#fff" />
        <path d="M9 5q1.500 2 0 4M11 3q3 4 0 8" stroke="#fff" />
        <path d="M13 1q4.500 6 0 12" stroke="#888" />
      </Icon>
      <div className="ml-[2px] w-[68px] pt-[4px] text-center text-[12px] leading-[18px] tracking-[-0.5px]">
        <div>3:13 PM</div>
        <div>9/28/2025</div>
      </div>
      <Icon className="mt-[4px] ml-[9px]" w={26} h={28}>
        <path d="M0 5h16v12H9l-4 4v-4H0z" fill="#fff" />
        <path d="M3 8.500h10M3 11h10M3 13.500h7" stroke="#1a1a1a" />
        <circle cx="15.500" cy="20" r="7.500" fill="#3c3c3c" stroke="#a5a5a5" />
        <text x="12.500" y="24" fontSize="11" fontFamily="Noto Sans, sans-serif" fill="#fff">3</text>
      </Icon>
    </div>
  );
}

export default function App() {
  return (
    <div className="h-[764px] w-[1362px] overflow-hidden bg-[#222933] font-['Noto_Sans',sans-serif]">
      <TitleBar />
      <Ribbon />

      <div className="flex">
        <div className="w-[1243px]">
          <div className="relative h-[611px] bg-[#c1dcf6]">
            <Crankshaft />
            <NavBar />
            {/* document window buttons */}
            <div className="absolute top-[5px] right-[2px] flex gap-[10px]">
              <Icon w={10} h={13}><path d="M1 11h8" stroke="#2f4256" strokeWidth="2" /></Icon>
              <Icon w={13} h={13}><path d="M.7 1.700h11.600v9.600H.7zM6 1.700v9.600M6 6.500h6.300" stroke="#2f4256" strokeWidth="1.200" /></Icon>
              <Icon w={11} h={13} className="-ml-[2px]"><path d="M.5 1.500l10 10m0-10l-10 10" stroke="#2f4256" strokeWidth="1.300" /></Icon>
            </div>
          </div>
          <div className="flex h-[24px] items-center text-[12px] tracking-[-0.2px]">
            <div className="flex h-full w-[64px] items-center bg-[#3b4453] pt-px pl-[5px] text-[#b4bac4]">
              <HomeIcon />
              <span className="ml-[3px] pt-px tracking-[-0.35px]">Home</span>
            </div>
            <div className="flex h-full w-[83px] items-center border-b-[3px] border-[#3e9bd6] bg-[#3b4453] pl-[8px] text-white">
              <span className="w-[59px] tracking-[-0.5px]">Bandul.ipt</span>
              <Icon w={9} h={9}><path d="M.5 .5l8 8m0-8l-8 8" stroke="#a9afba" /></Icon>
            </div>
            <Icon className="mr-[5px] ml-auto" w={14} h={12}><path d="M0 1h14M0 6h14M0 11h14" stroke="#e9ebee" strokeWidth="1.500" /></Icon>
          </div>
        </div>
        <Browser />
      </div>

      <div className="flex h-[24px] items-center bg-[#2e3541] text-[12px] tracking-[-0.4px] text-[#e3e6ea]">
        <span className="w-[1287px] pt-[3px] pl-px">Ready</span>
        <span className="h-[20px] w-[40px] border-l border-[#d5d8dd] pl-[9px] leading-[20px]">1</span>
        <span className="h-[20px] border-l border-[#d5d8dd] pl-[7px] leading-[20px]">1</span>
      </div>
      <Taskbar />
    </div>
  );
}
